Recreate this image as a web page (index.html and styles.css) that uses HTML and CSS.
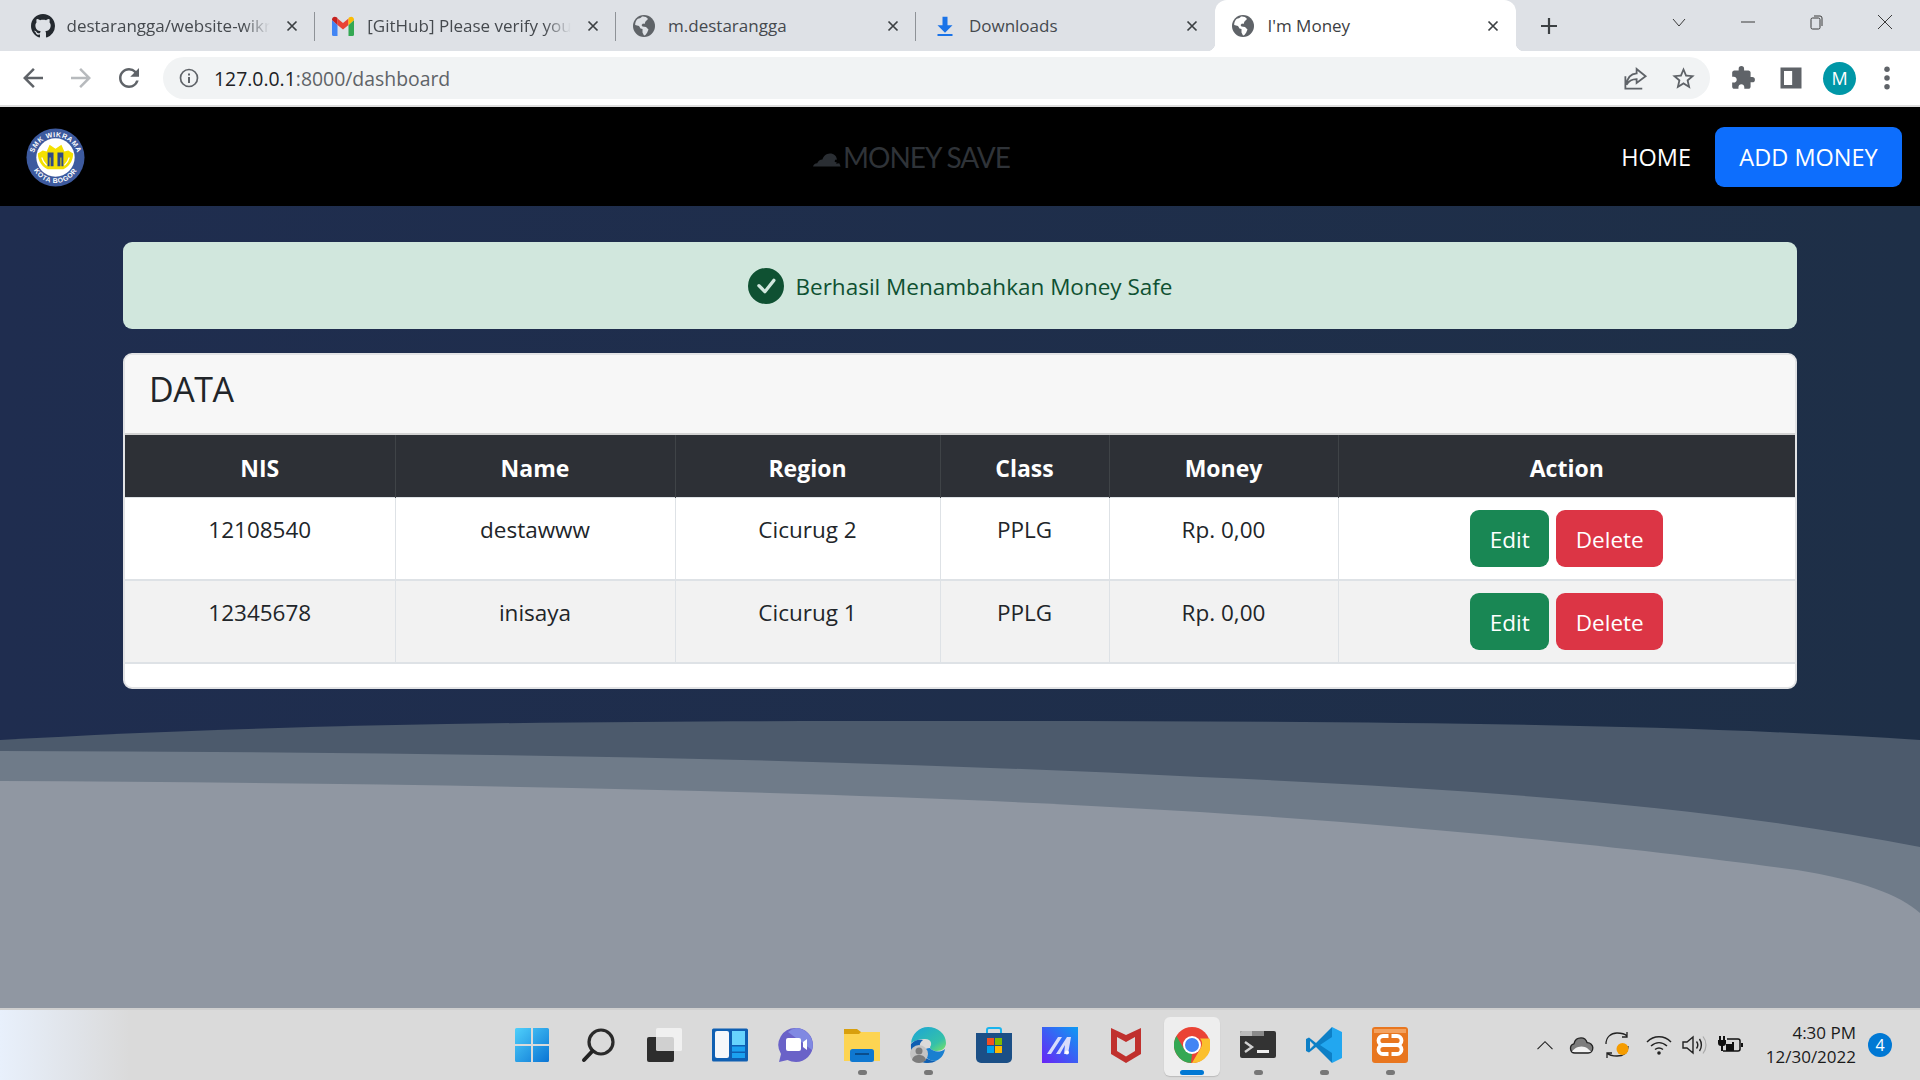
FILE: index.html
```html
<!DOCTYPE html>
<html lang="en">
<head>
    <meta charset="UTF-8">
    <title>I'm Money</title>
    <link rel="stylesheet" href="styles.css">
</head>
<body>
    <!-- browser chrome -->
    <div class="tabstrip">
        <div class="tab">
            <svg class="favicon" viewBox="0 0 16 16"><path fill="#24292f" d="M8 0C3.58 0 0 3.58 0 8c0 3.54 2.29 6.53 5.47 7.59.4.07.55-.17.55-.38 0-.19-.01-.82-.01-1.49-2.01.37-2.53-.49-2.69-.94-.09-.23-.48-.94-.82-1.13-.28-.15-.68-.52-.01-.53.63-.01 1.08.58 1.23.82.72 1.21 1.87.87 2.33.66.07-.52.28-.87.51-1.07-1.78-.2-3.64-.89-3.64-3.95 0-.87.31-1.59.82-2.15-.08-.2-.36-1.02.08-2.12 0 0 .67-.21 2.2.82.64-.18 1.32-.27 2-.27.68 0 1.36.09 2 .27 1.53-1.04 2.2-.82 2.2-.82.44 1.1.16 1.92.08 2.12.51.56.82 1.27.82 2.15 0 3.07-1.87 3.75-3.65 3.95.29.25.54.73.54 1.48 0 1.07-.01 1.93-.01 2.2 0 .21.15.46.55.38A8.013 8.013 0 0016 8c0-4.42-3.58-8-8-8z"/></svg>
            <span class="tab-title fade">destarangga/website-wikr</span>
            <svg class="tab-close" viewBox="0 0 12 12"><path d="M1.5 1.5l9 9M10.5 1.5l-9 9"/></svg>
        </div>
        <div class="tab">
            <svg class="favicon" viewBox="0 0 24 24">
                <path fill="#4285f4" d="M1 6v14.5A1.5 1.5 0 002.5 22H6.500V11z"/>
                <path fill="#34a853" d="M17.500 22h4a1.500 1.500 0 001.500-1.500V6l-5.500 5z"/>
                <path fill="#ea4335" d="M6.500 11V4.500L12 9l5.500-4.500V11L12 15.500z"/>
                <path fill="#c5221f" d="M1 6v-.500C1 3 3.800 1.800 5.600 3.300l.9.700V11z"/>
                <path fill="#fbbc04" d="M23 6v-.500C23 3 20.200 1.800 18.400 3.300l-.9.700V11z"/>
            </svg>
            <span class="tab-title fade">[GitHub] Please verify you</span>
            <svg class="tab-close" viewBox="0 0 12 12"><path d="M1.5 1.5l9 9M10.5 1.5l-9 9"/></svg>
        </div>
        <div class="tab">
            <svg class="favicon" viewBox="0 0 24 24"><circle cx="12" cy="12" r="11" fill="#5f6368"/><path fill="#dee1e6" d="M10 2.500c-1 1.500-3 2-4.500 2.500C4 6.500 3 9 3.200 11l3.800 1 1.500 2.500 2 .5v3.500l1.500 3c1.500 0 2-1.500 3-2.500l1.500-3.500-2.500-2.500-3.500-.5-1-1.500 1.500-1.500 1.500.5 1-2.500 2.500-2.500C15 2.800 12 2.200 10 2.500z"/></svg>
            <span class="tab-title">m.destarangga</span>
            <svg class="tab-close" viewBox="0 0 12 12"><path d="M1.5 1.5l9 9M10.5 1.5l-9 9"/></svg>
        </div>
        <div class="tab tab-last">
            <svg class="favicon favicon-download" viewBox="0 0 24 24"><path fill="#1a73e8" d="M9 1h6v10h6l-9 9-9-9h6zM3 21.500h18V24H3z"/></svg>
            <span class="tab-title">Downloads</span>
            <svg class="tab-close" viewBox="0 0 12 12"><path d="M1.5 1.5l9 9M10.5 1.5l-9 9"/></svg>
        </div>
        <div class="tab tab-active">
            <svg class="favicon" viewBox="0 0 24 24"><circle cx="12" cy="12" r="11" fill="#5f6368"/><path fill="#fff" d="M10 2.500c-1 1.500-3 2-4.500 2.500C4 6.500 3 9 3.200 11l3.800 1 1.500 2.500 2 .5v3.500l1.500 3c1.500 0 2-1.500 3-2.500l1.500-3.500-2.500-2.500-3.500-.5-1-1.500 1.500-1.500 1.500.5 1-2.500 2.500-2.500C15 2.800 12 2.200 10 2.500z"/></svg>
            <span class="tab-title">I'm Money</span>
            <svg class="tab-close" viewBox="0 0 12 12"><path d="M1.5 1.5l9 9M10.5 1.5l-9 9"/></svg>
        </div>
        <svg class="new-tab" viewBox="0 0 18 18"><path d="M9 1v16M1 9h16"/></svg>
        <div class="window-controls">
            <svg viewBox="0 0 16 16"><path d="M2 5l6 7 6-7"/></svg>
            <svg viewBox="0 0 16 16"><path d="M1 8h14"/></svg>
            <svg viewBox="0 0 16 16"><rect x="3" y="4" width="9" height="11" rx="1.500"/><path d="M6 2h6a2 2 0 012 2v8"/></svg>
            <svg viewBox="0 0 16 16"><path d="M1 1l14 14M15 1L1 15"/></svg>
        </div>
    </div>

    <div class="toolbar">
        <svg class="tool" viewBox="0 0 24 24"><path fill="#5f6368" d="M20 11H7.830l5.590-5.590L12 4l-8 8 8 8 1.410-1.410L7.830 13H20v-2z"/></svg>
        <svg class="tool" viewBox="0 0 24 24"><path fill="#b7babd" d="M12 4l-1.410 1.410L16.170 11H4v2h12.170l-5.580 5.590L12 20l8-8z"/></svg>
        <svg class="tool" viewBox="0 0 24 24"><path fill="#5f6368" d="M17.650 6.350A7.958 7.958 0 0012 4c-4.420 0-7.990 3.580-7.990 8s3.570 8 7.990 8c3.730 0 6.840-2.550 7.730-6h-2.080A5.990 5.990 0 0112 18c-3.310 0-6-2.690-6-6s2.690-6 6-6c1.660 0 3.140.690 4.220 1.780L13 11h7V4l-2.350 2.350z"/></svg>
        <div class="omnibox">
            <svg class="omni-info" viewBox="0 0 20 20"><circle cx="10" cy="10" r="8.500" fill="none" stroke="#5f6368" stroke-width="1.700"/><path fill="#5f6368" d="M9 9h2v6H9zM9 5.500h2v2H9z"/></svg>
            <span class="url"><span class="url-host">127.0.0.1</span>:8000/dashboard</span>
            <svg class="omni-icon omni-share" viewBox="0 0 24 24"><path fill="none" stroke="#5f6368" stroke-width="1.600" d="M3 10v11h15M13 3.500l8 6.500-8 6v-3.500c-4 0-7 1.500-9 5 .5-5.500 3.500-9.500 9-10z"/></svg>
            <svg class="omni-icon" viewBox="0 0 24 24"><path fill="#5f6368" d="M22 9.240l-7.190-.620L12 2 9.190 8.630 2 9.240l5.460 4.730L5.820 21 12 17.270 18.180 21l-1.630-7.030L22 9.240zM12 15.400l-3.760 2.270 1-4.280-3.320-2.880 4.380-.380L12 6.100l1.710 4.040 4.380.380-3.320 2.880 1 4.280L12 15.400z"/></svg>
        </div>
        <svg class="tool tool-ext" viewBox="0 0 24 24"><path fill="#5f6368" d="M20.500 11H19V7c0-1.100-.9-2-2-2h-4V3.500a2.500 2.500 0 00-5 0V5H4c-1.100 0-1.990.9-1.990 2v3.800H3.500c1.490 0 2.700 1.210 2.700 2.700s-1.210 2.700-2.700 2.700H2V20c0 1.100.9 2 2 2h3.800v-1.500c0-1.490 1.210-2.700 2.700-2.700 1.490 0 2.700 1.210 2.700 2.700V22H17c1.100 0 2-.9 2-2v-4h1.500a2.500 2.500 0 000-5z"/></svg>
        <svg class="tool tool-panel" viewBox="0 0 24 24"><path fill="#5f6368" d="M3 3h18v18H3zM6 6v12h7V6z"/></svg>
        <div class="avatar">M</div>
        <svg class="tool tool-menu" viewBox="0 0 24 24"><g fill="#5f6368"><circle cx="12" cy="5" r="2.200"/><circle cx="12" cy="12" r="2.200"/><circle cx="12" cy="19" r="2.200"/></g></svg>
    </div>

    <!-- the page itself -->
    <nav class="navbar">
        <svg class="school-logo" viewBox="0 0 60 60">
            <defs>
                <path id="logo-top" d="M7 32a23 23 0 0146 0"/>
                <path id="logo-bottom" d="M5 31a25 25 0 0050 0"/>
            </defs>
            <circle cx="30" cy="30" r="29.500" fill="#3d5a9e"/>
            <circle cx="30" cy="30" r="19.500" fill="#fff"/>
            <text class="logo-text"><textPath href="#logo-top" startOffset="50%" text-anchor="middle">SMK WIKRAMA</textPath></text>
            <text class="logo-text"><textPath href="#logo-bottom" startOffset="50%" text-anchor="middle">KOTA BOGOR</textPath></text>
            <path fill="#f4e000" d="M12 26l5-3 4 1 3-7 6 4 6-4 3 7 4-1 5 3c0 8-5 14-10 16H22c-5-2-10-8-10-16z"/>
            <path fill="#2f4a86" d="M22 25h6v14h-3v-9h-1v9h-2zM32 25h6v14h-2v-9h-1v9h-3z"/>
            <path fill="none" stroke="#fff" stroke-width="1.200" d="M16 30c1 4 3 6 5 8M44 30c-1 4-3 6-5 8"/>
        </svg>
        <div class="brand">
            <svg class="brand-cloud" viewBox="0 0 32 16"><path fill="#2a2e33" d="M0 15.500c.5-2 2-3.500 4.500-3.500C5.500 9.500 7.500 8 10 8c1-3.500 4-6.500 8-6.500 4.500 0 7 2.500 7.500 6.500l-2.500 1 3 1.500-1.500 2 3.500-.5 1.500 3.500z"/><path fill="#000" d="M24 8l3 1.500-1 2-3-1z"/></svg>
            <span class="brand-name">MONEY SAVE</span>
        </div>
        <div class="nav-links">
            <a class="nav-home">HOME</a>
            <a class="nav-add">ADD MONEY</a>
        </div>
    </nav>

    <main class="content">
        <svg class="waves" viewBox="0 206 1920 802" preserveAspectRatio="none">
            <path fill="#4c5a6c" d="M0 740C300 722 640 721 918 721C1300 721 1650 722 1920 740V1008H0Z"/>
            <path fill="#6f7b89" d="M0 751C400 752 800 757 1200 777C1500 790 1720 808 1920 847V1008H0Z"/>
            <path fill="#9097a2" d="M0 781C400 783 850 790 1200 812C1450 828 1650 850 1797 870C1860 880 1900 895 1920 913V1008H0Z"/>
        </svg>

        <div class="container">
            <div class="alert">
                <svg class="alert-icon" viewBox="0 0 16 16"><path fill="#0f5132" d="M16 8A8 8 0 1 1 0 8a8 8 0 0 1 16 0zm-3.970-3.030a.75.75 0 0 0-1.080.022L7.477 9.417 5.384 7.323a.75.75 0 0 0-1.060 1.060L6.970 11.030a.75.75 0 0 0 1.079-.020l3.992-4.990a.75.75 0 0 0-.010-1.050z"/></svg>
                <span class="alert-text">Berhasil Menambahkan Money Safe</span>
            </div>

            <section class="card">
                <h4 class="card-header">DATA</h4>
                <table class="data-table">
                    <colgroup>
                        <col class="col-nis"><col class="col-name"><col class="col-region">
                        <col class="col-class"><col class="col-money"><col class="col-action">
                    </colgroup>
                    <thead>
                        <tr><th>NIS</th><th>Name</th><th>Region</th><th>Class</th><th>Money</th><th>Action</th></tr>
                    </thead>
                    <tbody>
                        <tr>
                            <td>12108540</td><td>destawww</td><td>Cicurug 2</td><td>PPLG</td><td>Rp. 0,00</td>
                            <td class="action-cell"><div class="actions"><a class="btn btn-edit">Edit</a><a class="btn btn-delete">Delete</a></div></td>
                        </tr>
                        <tr>
                            <td>12345678</td><td>inisaya</td><td>Cicurug 1</td><td>PPLG</td><td>Rp. 0,00</td>
                            <td class="action-cell"><div class="actions"><a class="btn btn-edit">Edit</a><a class="btn btn-delete">Delete</a></div></td>
                        </tr>
                    </tbody>
                </table>
            </section>
        </div>
    </main>

    <!-- windows taskbar -->
    <footer class="taskbar">
        <div class="task-icons">
            <div class="task-item">
                <svg class="task-icon" viewBox="0 0 36 36">
                    <defs><linearGradient id="win-blue" x1="0" y1="0" x2="1" y2="1"><stop offset="0" stop-color="#4fd0fb"/><stop offset="1" stop-color="#0a74d4"/></linearGradient></defs>
                    <path fill="url(#win-blue)" d="M1 2.500A1.500 1.500 0 012.500 1H17v16H1zM19 1h14.500A1.500 1.500 0 0135 2.500V17H19zM1 19h16v16H2.500A1.500 1.500 0 011 33.500zM19 19h16v14.500a1.500 1.500 0 01-1.500 1.500H19z"/>
                </svg>
            </div>
            <div class="task-item">
                <svg class="task-icon" viewBox="0 0 36 36"><circle cx="21" cy="15" r="12" fill="none" stroke="#2a2a2a" stroke-width="3.200"/><path stroke="#222" stroke-width="4" stroke-linecap="round" d="M4 33l8.500-9"/></svg>
            </div>
            <div class="task-item">
                <svg class="task-icon" viewBox="0 0 36 36"><rect x="1" y="10" width="27" height="25" rx="2" fill="#2d2d2d"/><rect x="10" y="1" width="26" height="23" rx="1.500" fill="#f4f4f4" fill-opacity=".82"/></svg>
            </div>
            <div class="task-item">
                <svg class="task-icon" viewBox="0 0 36 36"><rect width="36" height="33" y="1.500" rx="1.500" fill="#0f5fb2"/><rect x="3" y="4" width="14" height="27" rx="2" fill="#f5f7fa"/><rect x="20" y="4" width="13" height="14" fill="#67d4fd"/><rect x="20" y="19.500" width="13" height="5" fill="#1ba1f0"/><rect x="20" y="26" width="13" height="5" fill="#1ba1f0"/></svg>
            </div>
            <div class="task-item">
                <svg class="task-icon" viewBox="0 0 36 36"><path fill="#6a62c8" d="M18 1a17 17 0 110 34c-3 0-6-.7-8.500-2L1 35l2-8A17 17 0 0118 1z"/><path fill="#8089e2" d="M18 1a17 17 0 0116 22L10 5a17 17 0 018-4z"/><rect x="8" y="11" width="15" height="13" rx="2" fill="#fff"/><path fill="#fff" d="M25 15l4-3v11l-4-3z"/></svg>
            </div>
            <div class="task-item task-running">
                <svg class="task-icon" viewBox="0 0 36 36"><path fill="#d89f0d" d="M0 2h13l4 3h19v6H0z"/><path fill="#fdd452" d="M0 7h15l2-2h19v29H0z"/><rect x="6" y="22" width="24" height="13" rx="2.500" fill="#0f78d1"/><rect x="11" y="26" width="14" height="2" fill="#0a4d8c"/></svg>
            </div>
            <div class="task-item task-running">
                <svg class="task-icon" viewBox="0 0 36 36">
                    <defs><linearGradient id="edge-top" x1="0" y1="0" x2="1" y2="1"><stop offset="0" stop-color="#1aa4d8"/><stop offset=".7" stop-color="#35c1a9"/><stop offset="1" stop-color="#7fe35f"/></linearGradient></defs>
                    <path fill="url(#edge-top)" d="M1 16C2 7 9 0 18 0c10 0 18 7 18 16 0 5-4 8-9 8-4 0-7-2-7-4 2-2 2-8-5-8-6 0-11 2-14 4z"/>
                    <path fill="#0f5fb2" d="M1 17c3-4 8-5 12-4-3 2-4 5-3 9 1 6 7 12 16 12-2 1-5 2-8 2C8 36 0 28 1 17z"/>
                    <path fill="#1a7fd0" d="M20 21c3 4 10 5 15 1-1 6-5 11-10 12-6 0-12-5-11-10 1-2 3-3 6-3z"/>
                    <circle cx="9" cy="27" r="9" fill="#c4c4c4"/><circle cx="9" cy="24" r="3.500" fill="#7c7c7c"/><path fill="#7c7c7c" d="M2 33c1-4 4-5 7-5s6 1 7 5c-2 2-4 3-7 3s-5-1-7-3z"/>
                </svg>
            </div>
            <div class="task-item">
                <svg class="task-icon" viewBox="0 0 36 36"><path fill="none" stroke="#19b4ee" stroke-width="2" d="M11 6V3a2 2 0 012-2h10a2 2 0 012 2v6"/><path fill="#1b4f86" d="M0 6h36v25a5 5 0 01-5 5H5a5 5 0 01-5-5z"/><rect x="11" y="11" width="7" height="7" fill="#f25022"/><rect x="19" y="11" width="7" height="7" fill="#7fba00"/><rect x="11" y="19" width="7" height="7" fill="#00a4ef"/><rect x="19" y="19" width="7" height="7" fill="#ffb900"/></svg>
            </div>
            <div class="task-item">
                <svg class="task-icon" viewBox="0 0 36 36">
                    <defs><linearGradient id="mx-bg" x1="1" y1="0" x2="0" y2="1"><stop offset="0" stop-color="#0c9bf3"/><stop offset="1" stop-color="#6a23f5"/></linearGradient></defs>
                    <rect width="36" height="36" fill="url(#mx-bg)"/><path fill="#d8dcfb" d="M5 27L16 10h4L9 27zM14 27L25 10h4l-3 17h-4l1-9-5 9z"/><circle cx="25" cy="25.500" r="2" fill="#fff"/>
                </svg>
            </div>
            <div class="task-item">
                <svg class="task-icon" viewBox="0 0 36 36"><path fill="#c0302d" d="M3 1l15 7 15-7v26L18 36 3 27zM9 10v14l9 5.500 9-5.500V10l-9 5z"/></svg>
            </div>
            <div class="task-item task-active">
                <svg class="task-icon" viewBox="0 0 36 36">
                    <circle cx="18" cy="18" r="18" fill="#ea4335"/>
                    <path fill="#34a853" d="M18 36A18 18 0 012.400 9l8 13.500L18 27l-1 9z"/>
                    <path fill="#fbc02d" d="M18 36l9-15.500c1.500-2.500 1.500-6.500-1-9h9.500A18 18 0 0118 36z"/>
                    <circle cx="18" cy="18" r="9" fill="#fff"/><circle cx="18" cy="18" r="7" fill="#4285f4"/>
                </svg>
            </div>
            <div class="task-item task-running">
                <svg class="task-icon" viewBox="0 0 36 28"><rect width="36" height="27" rx="2" fill="#333"/><path fill="#bbb" d="M2 0h10v5H0V2a2 2 0 012-2z"/><path fill="#8a8a8a" d="M12 0h12v5H12z"/><path fill="none" stroke="#d0d0d0" stroke-width="2.400" d="M5 11l7 5-7 5"/><rect x="17" y="19" width="12" height="3" fill="#eee"/></svg>
            </div>
            <div class="task-item task-running">
                <svg class="task-icon" viewBox="0 0 36 36"><path fill="#0d7fc6" d="M26 0L10 16 3 10.500 0 12v12l3 1.500 7-5.500 16 16z"/><path fill="#22a7f0" d="M26 0l10 5v26l-10 5V10L14 18l12 8z"/><path fill="#dadada" d="M4 14l4 4-4 4z"/></svg>
            </div>
            <div class="task-item task-running">
                <svg class="task-icon" viewBox="0 0 36 36"><rect width="36" height="36" rx="3" fill="#e8761f"/><rect x="2" y="2" width="32" height="4" fill="#f3a15e"/><path fill="none" stroke="#fff" stroke-width="3.800" d="M16.500 9H11a4.500 4.500 0 000 9 4.500 4.500 0 000 9h5.500M19.500 9H25a4.500 4.500 0 010 9 4.500 4.500 0 010 9h-5.500M11 18h14"/></svg>
            </div>
        </div>

        <div class="tray">
            <svg class="tray-chevron" viewBox="0 0 20 12"><path d="M1 11l9-9 9 9"/></svg>
            <svg class="tray-cloud" viewBox="0 0 26 18"><path fill="#7d7d7d" stroke="#222" stroke-width="1.400" d="M6 17a5 5 0 01-1-9.800C6 3 9 1 12.500 1c3 0 5.500 2 6.500 5 3.500 0 6 2.500 6 5.500S23 17 20 17z"/><path fill="#f2f2f2" d="M3 16c1-3 5-6 10-6s8 3 10 6z"/></svg>
            <svg class="tray-sync" viewBox="0 0 26 28"><path fill="none" stroke="#222" stroke-width="1.300" d="M2 13C2 6 7 2 13 2c4 0 8 1 10 3M23 1v5h-5M24 15c0 7-5 10-11 10-4 0-8-1-10-3M3 27v-5h5"/><circle cx="18.500" cy="18" r="6" fill="#f59c00"/></svg>
            <svg class="tray-wifi" viewBox="0 0 26 20"><path fill="none" stroke="#222" stroke-width="1.500" d="M1 7c7-7 17-7 24 0M5 11c5-4.500 11-4.500 16 0M9 14.500c2.500-2 5.500-2 8 0"/><circle cx="13" cy="18" r="1.800" fill="#222"/></svg>
            <svg class="tray-sound" viewBox="0 0 26 20"><path fill="none" stroke="#222" stroke-width="1.400" d="M1 7h4l6-5v16l-6-5H1zM14.500 6.500c1.500 2 1.500 5 0 7M17.500 4c2.500 3.500 2.500 8.500 0 12"/><path fill="none" stroke="#aaa" stroke-width="1.200" d="M21 1.500c4 5 4 12 0 17"/></svg>
            <svg class="tray-battery" viewBox="0 0 26 20"><path fill="#111" d="M2 1h2v4h2V1h2v4h1v3a3 3 0 01-3 3v5H4v-5a3 3 0 01-3-3V5h1z"/><path fill="none" stroke="#111" stroke-width="1.500" d="M10 4h11a2 2 0 012 2v8a2 2 0 01-2 2H6"/><path fill="#111" d="M24 8h2v4h-2zM9 9h6V7h2v9H9z"/></svg>
            <div class="clock">
                <span>4:30 PM</span>
                <span>12/30/2022</span>
            </div>
            <div class="notify-badge">4</div>
        </div>
    </footer>
</body>
</html>
```

FILE: styles.css
```css
* {
    box-sizing: border-box;
}
html, body {
    margin: 0;
    height: 100%;
}
body {
    width: 1920px;
    height: 1080px;
    overflow: hidden;
    display: flex;
    flex-direction: column;
    font-family: "Open Sans", "Liberation Sans", sans-serif;
    color: #212529;
}

/* tabs */
.tabstrip {
    height: 51px;
    flex: none;
    display: flex;
    align-items: stretch;
    padding-left: 14px;
    background-color: #dee1e6;
}
.tab {
    position: relative;
    width: 300.800px;
    flex: none;
    display: flex;
    align-items: center;
    padding: 0 17px 0 16.500px;
    font-size: 17px;
    color: #45494e;
}
.tab-last {
    width: 298.600px;
}
.tab::after {
    content: "";
    position: absolute;
    right: 0;
    top: 12px;
    height: 29px;
    width: 1px;
    background-color: #8e9297;
}
.tab-last::after,
.tab-active::after {
    display: none;
}
.tab-active {
    background-color: #fff;
    border-radius: 12px 12px 0 0;
    color: #3c4043;
}
.tab-active::before {
    content: "";
    position: absolute;
    left: -8px;
    right: -8px;
    bottom: 0;
    height: 8px;
    z-index: 0;
    background:
        radial-gradient(circle at 0 0, #dee1e6 8px, transparent 8.5px) 0 0 / 8px 8px no-repeat,
        radial-gradient(circle at 100% 0, #dee1e6 8px, transparent 8.5px) 100% 0 / 8px 8px no-repeat,
        linear-gradient(#fff, #fff) 0 0 / 8px 8px no-repeat,
        linear-gradient(#fff, #fff) 100% 0 / 8px 8px no-repeat;
}
.favicon {
    width: 24px;
    height: 24px;
    flex: none;
    margin-right: 12px;
    position: relative;
}
.favicon-download {
    width: 20px;
    height: 20px;
    margin-left: 2px;
    margin-right: 14px;
}
.tab-title {
    flex: 1;
    min-width: 0;
    white-space: nowrap;
}
.fade {
    -webkit-mask-image: linear-gradient(90deg, #000 86%, transparent 99%);
    mask-image: linear-gradient(90deg, #000 86%, transparent 99%);
}
.tab-close {
    width: 12px;
    height: 12px;
    flex: none;
    margin-left: 14px;
    position: relative;
}
.tab-close path {
    fill: none;
    stroke: #3c4043;
    stroke-width: 1.7;
}
.new-tab {
    width: 18px;
    height: 18px;
    align-self: center;
    margin-left: 24px;
}
.new-tab path {
    fill: none;
    stroke: #3c4043;
    stroke-width: 2.2;
}
.window-controls {
    margin-left: auto;
    display: flex;
    align-items: center;
    height: 44px;
    padding-right: 27px;
    gap: 52.600px;
}
.window-controls svg {
    width: 16px;
    height: 16px;
}
.window-controls path,
.window-controls rect {
    fill: none;
    stroke: #3a3a3a;
    stroke-width: 1;
}

/* address bar */
.toolbar {
    height: 54px;
    flex: none;
    display: flex;
    align-items: center;
    padding-left: 18px;
    gap: 18px;
    background-color: #fff;
}
.tool {
    width: 30px;
    height: 30px;
    flex: none;
}
.tool-ext {
    width: 26px;
    height: 26px;
    margin-left: 2px;
    margin-right: 2px;
}
.tool-panel {
    width: 28px;
    height: 28px;
    margin-left: 1px;
    margin-right: 1px;
}
.tool-menu {
    margin-left: -2px;
}
.omnibox {
    width: 1547px;
    height: 42px;
    margin-left: 1px;
    display: flex;
    align-items: center;
    padding: 0 13px 0 16px;
    border-radius: 21px;
    background-color: #f1f3f4;
}
.omni-info {
    width: 20px;
    height: 20px;
    flex: none;
}
.url {
    margin-left: 15px;
    font-size: 19.400px;
    color: #5f6368;
}
.url-host {
    color: #202124;
}
.omni-icon {
    width: 27px;
    height: 27px;
    flex: none;
    margin-left: 21px;
}
.omni-share {
    margin-left: auto;
}
.avatar {
    width: 33px;
    height: 33px;
    flex: none;
    margin-left: -1px;
    border-radius: 50%;
    background-color: #0097a7;
    color: #fff;
    font-size: 18px;
    line-height: 33px;
    text-align: center;
}

/* navbar */
.navbar {
    height: 101px;
    flex: none;
    display: flex;
    align-items: center;
    padding: 0 18px 0 26px;
    background-color: #000;
    border-top: 2px solid #dedede;
}
.school-logo {
    width: 59px;
    height: 59px;
    flex: none;
    margin-top: 1px;
}
.logo-text {
    font-family: "Liberation Sans", sans-serif;
    font-size: 7px;
    font-weight: 700;
    letter-spacing: .6px;
    fill: #fff;
}
.brand {
    margin-left: 728px;
    display: flex;
    align-items: center;
    color: #2f3338;
}
.brand-cloud {
    width: 30px;
    height: 15px;
    margin-top: 5px;
}
.brand-name {
    font-family: Lato, sans-serif;
    font-size: 28px;
    font-weight: 400;
    letter-spacing: -1px;
    line-height: 1;
}
.nav-links {
    margin-left: auto;
    display: flex;
    align-items: center;
    font-size: 23.500px;
    color: #fff;
    gap: 24px;
}
.nav-add {
    width: 187px;
    height: 60px;
    line-height: 60px;
    text-align: center;
    border-radius: 9px;
    background-color: #0d6efd;
}

/* main area */
.content {
    position: relative;
    flex: 1;
    padding-top: 36px;
    background: linear-gradient(90deg, #1f2d4f, #1e2f47);
}
.waves {
    position: absolute;
    left: 0;
    top: 0;
    width: 100%;
    height: 100%;
}
.container {
    position: relative;
    width: 1674px;
    margin: 0 auto;
}
.alert {
    height: 87px;
    margin-bottom: 24px;
    display: flex;
    align-items: center;
    justify-content: center;
    gap: 12px;
    border-radius: 9px;
    background-color: #d1e7dd;
    color: #0f5132;
    font-size: 22.500px;
}
.alert-text {
    padding-top: 2px;
}
.alert-icon {
    width: 36px;
    height: 36px;
}
.card {
    height: 336px;
    background-color: #fff;
    border: 2px solid #e2e3e5;
    border-radius: 9px;
    overflow: hidden;
}
.card-header {
    height: 80px;
    margin: 0;
    padding: 10px 24px 0;
    background-color: #f7f7f7;
    border-bottom: 2px solid #d3d3d3;
    font-size: 34px;
    font-weight: 500;
    letter-spacing: -.5px;
    line-height: 48px;
}
.data-table {
    width: 100%;
    table-layout: fixed;
    border-collapse: collapse;
}
.col-nis { width: 270px; }
.col-name { width: 280px; }
.col-region { width: 265px; }
.col-class { width: 169px; }
.col-money { width: 229px; }
.data-table th,
.data-table td {
    padding: 14px 12px 11px;
    text-align: center;
    vertical-align: top;
    font-size: 22.500px;
    line-height: 36px;
    border: 1px solid #dee2e6;
}
.data-table .action-cell {
    padding: 12px;
}
.data-table tr > :first-child { border-left: 0; }
.data-table tr > :last-child { border-right: 0; }
.data-table th {
    height: 62px;
    padding: 15px 12px 10px;
    background-color: #2d3036;
    border-color: #3f4347;
    border-top: 0;
    border-bottom: 0;
    color: #fff;
    font-size: 23px;
    font-weight: 700;
}
.data-table td {
    height: 83px;
    border-bottom-width: 2px;
}
.data-table tbody tr:nth-child(even) {
    background-color: #f2f2f2;
}
.actions {
    display: flex;
    justify-content: center;
    gap: 7px;
}
.btn {
    height: 57px;
    line-height: 59px;
    text-align: center;
    color: #fff;
    border-radius: 9px;
}
.btn-edit {
    width: 79px;
    background-color: #198754;
}
.btn-delete {
    width: 107px;
    background-color: #dc3545;
}

/* taskbar */
.taskbar {
    height: 72px;
    flex: none;
    position: relative;
    display: flex;
    justify-content: center;
    background: linear-gradient(90deg, #e8f0fc, #dadada 130px);
    border-top: 2px solid #cfcfcf;
}
.task-icons {
    display: flex;
    padding-left: 1px;
}
.task-item {
    position: relative;
    width: 66px;
    height: 70px;
    display: flex;
    align-items: center;
    justify-content: center;
}
.task-icon {
    width: 36px;
    height: 36px;
    position: relative;
}
.task-running::after,
.task-active::after {
    content: "";
    position: absolute;
    left: 50%;
    bottom: 5px;
    width: 9px;
    height: 5px;
    margin-left: -4px;
    border-radius: 3px;
    background-color: #777;
}
.task-active::before {
    content: "";
    position: absolute;
    left: 5px;
    right: 5px;
    top: 7px;
    bottom: 4px;
    border-radius: 6px;
    background-color: #eee;
    box-shadow: 0 1px 1px #bbb;
}
.task-active::after {
    width: 24px;
    margin-left: -12px;
    background-color: #0078d4;
}
.tray {
    position: absolute;
    right: 0;
    top: 0;
    height: 70px;
    display: flex;
    align-items: center;
    padding-right: 28px;
}
.tray svg {
    flex: none;
}
.tray-chevron {
    width: 18px;
    height: 10px;
    margin-right: 15px;
}
.tray-chevron path {
    fill: none;
    stroke: #222;
    stroke-width: 1.3;
}
.tray-cloud {
    width: 25px;
    height: 17px;
    margin-right: 10px;
}
.tray-sync {
    width: 26px;
    height: 28px;
    margin-right: 16px;
}
.tray-wifi {
    width: 26px;
    height: 20px;
    margin-right: 9px;
}
.tray-sound {
    width: 26px;
    height: 20px;
    margin-right: 9px;
    margin-left: 1px;
}
.tray-battery {
    width: 26px;
    height: 20px;
    margin-right: 23px;
}
.clock {
    display: flex;
    flex-direction: column;
    align-items: flex-end;
    font-size: 17px;
    line-height: 24px;
    color: #1a1a1a;
}
.notify-badge {
    width: 24px;
    height: 24px;
    margin-left: 12px;
    border-radius: 50%;
    background-color: #0078d4;
    color: #fff;
    font-size: 16px;
    line-height: 24px;
    text-align: center;
}
```
